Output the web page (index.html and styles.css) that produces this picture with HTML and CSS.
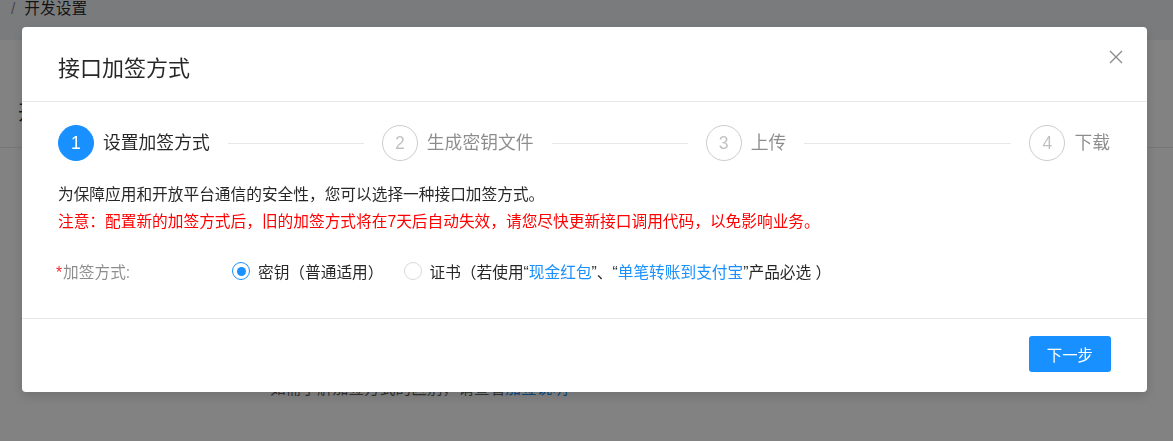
FILE: index.html
```html
<!DOCTYPE html>
<html lang="zh-CN">
<head>
    <meta charset="UTF-8">
    <meta name="viewport" content="width=device-width, initial-scale=1.0">
    <title>开发设置</title>
    <link rel="stylesheet" href="styles.css">
</head>
<body>
    <!-- Page behind the dialog -->
    <div class="page">
        <div class="crumbs"><span class="sep">/</span>开发设置</div>
        <div class="card">
            <div class="card-head"><h2>开发设置</h2></div>
            <div class="card-body">
                <p class="hint">如需了解加签方式的区别，请查看<a href="#">加签说明</a></p>
            </div>
        </div>
    </div>

    <!-- Dialog -->
    <div class="mask">
        <div class="modal">
            <div class="modal-head">
                <h3>接口加签方式</h3>
                <button class="close" type="button" aria-label="关闭">
                    <svg width="14" height="14" viewBox="0 0 14 14"><path d="M1 1L13 13M13 1L1 13" stroke="#8c8c8c" stroke-width="1.4" fill="none"/></svg>
                </button>
            </div>

            <div class="modal-body">
                <div class="steps">
                    <div class="step active">
                        <span class="step-icon">1</span>
                        <span class="step-title">设置加签方式</span>
                        <span class="step-line"></span>
                    </div>
                    <div class="step">
                        <span class="step-icon">2</span>
                        <span class="step-title">生成密钥文件</span>
                        <span class="step-line"></span>
                    </div>
                    <div class="step">
                        <span class="step-icon">3</span>
                        <span class="step-title">上传</span>
                        <span class="step-line"></span>
                    </div>
                    <div class="step">
                        <span class="step-icon">4</span>
                        <span class="step-title">下载</span>
                    </div>
                </div>

                <p class="intro">为保障应用和开放平台通信的安全性，您可以选择一种接口加签方式。</p>
                <p class="warn">注意：配置新的加签方式后，旧的加签方式将在7天后自动失效，请您尽快更新接口调用代码，以免影响业务。</p>

                <div class="form-row">
                    <label class="form-label"><span class="req">*</span>加签方式:</label>
                    <div class="radios">
                        <label class="radio checked"><span class="radio-dot"></span><span class="radio-text">密钥（普通适用）</span></label>
                        <label class="radio"><span class="radio-dot"></span><span class="radio-text">证书（若使用“<a href="#">现金红包</a>”、“<a href="#">单笔转账到支付宝</a>”产品必选 ）</span></label>
                    </div>
                </div>
            </div>

            <div class="modal-foot">
                <button class="btn-primary" type="button">下一步</button>
            </div>
        </div>
    </div>
</body>
</html>
```

FILE: styles.css
```css
body {
    margin: 0;
    font-family: "Liberation Sans", "Noto Sans CJK SC", sans-serif;
    font-size: 15.7px;
    color: rgba(0, 0, 0, 0.85);
    background: #f0f2f5;
    overflow: hidden;
}
a {
    color: #1890ff;
    text-decoration: none;
}
p, h2, h3 {
    margin: 0;
}

/* page behind */
.crumbs {
    height: 40px;
    padding-left: 11px;
    line-height: 18px;
    color: rgba(0, 0, 0, 0.85);
    white-space: nowrap;
}
.sep {
    margin-right: 9px;
    color: rgba(0, 0, 0, 0.45);
}
.card {
    background: #fff;
    height: 401px;
}
.card-head {
    height: 108px;
    box-sizing: border-box;
    padding: 59px 0 0 18px;
    border-bottom: 1px solid #e8e8e8;
}
.card-head h2 {
    font-size: 20px;
    font-weight: normal;
    line-height: 28px;
}
.hint {
    padding: 229px 0 0 270px;
    line-height: 24px;
    color: rgba(0, 0, 0, 0.65);
}

/* dialog */
.mask {
    position: fixed;
    inset: 0;
    background: rgba(0, 0, 0, 0.49);
    padding: 27px 0 0 22px;
}
.modal {
    position: relative;
    width: 1125px;
    background: #fff;
    border-radius: 4px;
    box-shadow: 0 4px 12px rgba(0, 0, 0, 0.15);
}
.modal-head {
    height: 75px;
    box-sizing: border-box;
    padding: 27px 36px 0;
    border-bottom: 1px solid #e8e8e8;
}
.modal-head h3 {
    font-size: 22px;
    font-weight: normal;
    line-height: 30px;
    color: rgba(0, 0, 0, 0.85);
}
.close {
    position: absolute;
    top: 23px;
    right: 24px;
    width: 14px;
    height: 14px;
    padding: 0;
    border: none;
    background: none;
    cursor: pointer;
}
.close svg {
    display: block;
}
.modal-body {
    padding: 23px 37px 29px 36px;
}

/* steps */
.steps {
    display: flex;
}
.step {
    flex: 1;
    display: flex;
    align-items: center;
    margin-right: 18px;
}
.step:last-child {
    flex: none;
    margin-right: 0;
}
.step-icon {
    width: 34px;
    height: 34px;
    border: 1px solid rgba(0, 0, 0, 0.2);
    border-radius: 50%;
    display: flex;
    align-items: center;
    justify-content: center;
    font-size: 17.6px;
    color: rgba(0, 0, 0, 0.25);
    flex: none;
}
.step-title {
    margin-left: 9px;
    font-size: 17.8px;
    line-height: 36px;
    color: rgba(0, 0, 0, 0.45);
    white-space: nowrap;
}
.step-line {
    flex: 1;
    height: 1px;
    margin-left: 18px;
    background: #e8e8e8;
}
.step.active .step-icon {
    background: #1890ff;
    border-color: #1890ff;
    color: #fff;
}
.step.active .step-title {
    color: rgba(0, 0, 0, 0.85);
}

/* text */
.intro {
    margin-top: 20px;
    line-height: 27px;
    color: rgba(0, 0, 0, 0.85);
}
.warn {
    line-height: 27px;
    color: #ff0000;
}

/* form */
.form-row {
    display: flex;
    align-items: center;
    height: 36px;
    margin-top: 18px;
}
.form-label {
    width: 176px;
    margin-left: -2px;
    color: rgba(0, 0, 0, 0.45);
}
.req {
    color: #f5222d;
    margin-right: 1px;
}
.radios {
    display: flex;
    align-items: center;
    gap: 20px;
}
.radio {
    display: flex;
    align-items: center;
    cursor: pointer;
    color: rgba(0, 0, 0, 0.85);
    white-space: nowrap;
}
.radio-dot {
    position: relative;
    width: 16px;
    height: 16px;
    border: 1px solid #d9d9d9;
    border-radius: 50%;
    flex: none;
}
.radio.checked .radio-dot {
    border-color: #1890ff;
}
.radio.checked .radio-dot::after {
    content: "";
    position: absolute;
    top: 3.5px;
    left: 3.5px;
    width: 9px;
    height: 9px;
    border-radius: 50%;
    background: #1890ff;
}
.radio-text {
    margin-left: 8px;
}

/* footer */
.modal-foot {
    border-top: 1px solid #e8e8e8;
    padding: 17px 36px 20px;
    display: flex;
    justify-content: flex-end;
}
.btn-primary {
    height: 36px;
    padding: 0 18px;
    border: none;
    border-radius: 3px;
    background: #1890ff;
    color: #fff;
    font-family: inherit;
    font-size: 15.4px;
    cursor: pointer;
}
```
